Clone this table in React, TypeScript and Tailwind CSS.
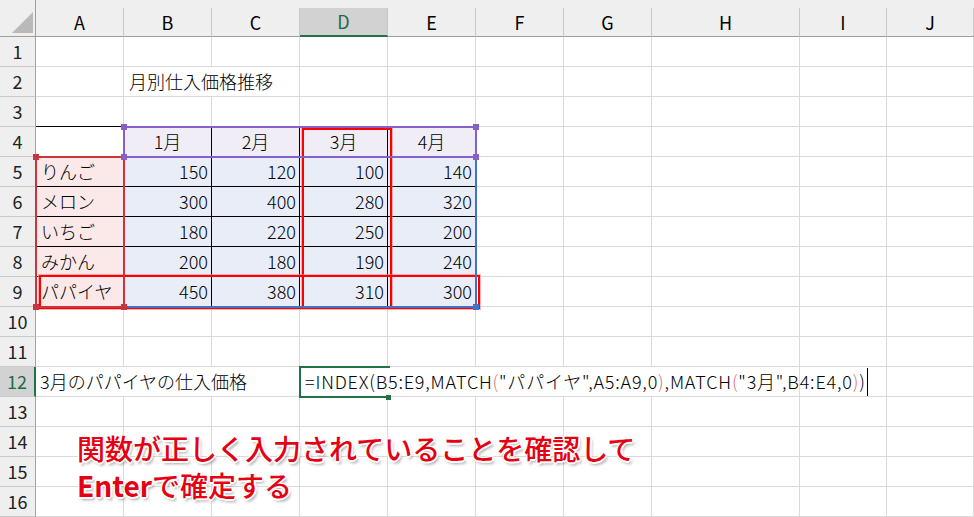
import React from 'react';

const cols = ['A', 'B', 'C', 'D', 'E', 'F', 'G', 'H', 'I', 'J'];

const fruits: [string, number, number, number, number][] = [
    ['りんご', 150, 120, 100, 140],
    ['メロン', 300, 400, 280, 320],
    ['いちご', 180, 220, 250, 200],
    ['みかん', 200, 180, 190, 240],
    ['パパイヤ', 450, 380, 310, 300],
];

const months = ['1月', '2月', '3月', '4月'];

// same track sizes for the sheet and for the layer drawn over it
const tracks = 'grid grid-cols-[36px_88px_88px_88px_88px_88px_88px_88px_148px_87px_87px] grid-rows-[37px_repeat(16,30px)]';

type CellProps = {
    children?: React.ReactNode;
    className?: string;
};

// one spreadsheet cell; the grid line sits on its right/bottom edge
const Cell = ({ children, className = '' }: CellProps) => (
    <div className={`flex items-center overflow-visible whitespace-nowrap border-b border-r ${className}`}>
        {children}
    </div>
);

const ColHeader = ({ label, active }: { label: string; active?: boolean }) => (
    <div className="h-[37px] bg-[#efefef] pt-2">
        <div
            className={`flex h-full items-center justify-center border-r border-[#c8c8c8] ${
                active ? 'border-b-2 border-b-[#217346] bg-[#d2d2d2] text-[#1e6b41]' : 'border-b border-b-[#9e9e9e] text-black'
            }`}
        >
            {label}
        </div>
    </div>
);

const RowHeader = ({ n, active }: { n: number; active?: boolean }) => (
    <div
        className={`flex items-center justify-center border-b border-[#c9c9c9] ${
            active ? 'border-r-2 border-r-[#217346] bg-[#d2d2d2] text-[#1e6b41]' : 'border-r border-r-[#a3a3a3] bg-[#efefef] text-[#222]'
        }`}
    >
        {n}
    </div>
);

const grid = 'border-[#dadada]';
const ink = 'border-black';

// little squares on the corners of a highlighted range
const Corners = ({ color, tl = true, tr = true, bl = true, br = true }: { color: string; tl?: boolean; tr?: boolean; bl?: boolean; br?: boolean }) => (
    <>
        {tl && <div className={`absolute -left-[4px] -top-[4px] h-[6px] w-[6px] ${color}`} />}
        {tr && <div className={`absolute -right-[4px] -top-[4px] h-[6px] w-[6px] ${color}`} />}
        {bl && <div className={`absolute -bottom-[4px] -left-[4px] h-[6px] w-[6px] ${color}`} />}
        {br && <div className={`absolute -bottom-[4px] -right-[4px] h-[6px] w-[6px] ${color}`} />}
    </>
);

export default function App() {
    const rows: React.ReactNode[] = [];

    for (let r = 1; r <= 16; r++) {
        rows.push(<RowHeader key={`h${r}`} n={r} active={r === 12} />);

        if (r === 2) {
            rows.push(<Cell key="2A" className={grid} />);
            rows.push(
                <Cell key="2B" className={`col-span-2 pl-[5px] font-light ${grid}`}>
                    月別仕入価格推移
                </Cell>
            );
            cols.slice(3).forEach((c) => rows.push(<Cell key={`2${c}`} className={grid} />));
            continue;
        }

        if (r === 12) {
            rows.push(
                <Cell key="12A" className={`col-span-3 pl-[4px] font-light ${grid}`}>
                    3月のパパイヤの仕入価格
                </Cell>
            );
            rows.push(
                <Cell key="12D" className={`col-span-5 pl-[5px] font-light tracking-[0.8px] ${grid}`}>
                    <span>=INDEX(B5:E9,MATCH</span>
                    <span className="text-[#e0707e]">(</span>
                    <span>"パパイヤ",A5:A9,0</span>
                    <span className="text-[#e0707e]">)</span>
                    <span>,MATCH</span>
                    <span className="text-[#e0707e]">(</span>
                    <span>"3月",B4:E4,0</span>
                    <span className="text-[#e0707e]">)</span>
                    <span>)</span>
                    <span className="ml-[1px] h-[28px] w-px shrink-0 bg-black" />
                </Cell>
            );
            rows.push(<Cell key="12I" className={grid} />);
            rows.push(<Cell key="12J" className={grid} />);
            continue;
        }

        cols.forEach((c, ci) => {
            const inTable = r >= 4 && r <= 9 && ci <= 4;
            let cls = grid;
            let content: React.ReactNode = null;

            if (r === 3 && ci <= 4) cls = `${grid} border-b-black`;
            if (inTable) cls = `${ink} font-light`;

            if (r === 4 && ci >= 1 && ci <= 4) {
                cls += ' bg-[#f0edf7] justify-center';
                content = months[ci - 1];
            } else if (r === 4 && ci === 0) {
                cls += ' bg-white';
            } else if (r >= 5 && r <= 9 && ci === 0) {
                cls += ' bg-[#fbe9e9] pl-[5px]';
                content = fruits[r - 5][0];
            } else if (r >= 5 && r <= 9 && ci <= 4) {
                cls += ' bg-[#e9edf7] justify-end pr-[3px]';
                content = fruits[r - 5][ci];
            }

            rows.push(
                <Cell key={`${r}${c}`} className={cls}>
                    {content}
                </Cell>
            );
        });
    }

    return (
        <div className="relative h-[517px] w-[974px] overflow-hidden bg-white font-['Noto_Sans_CJK_JP',sans-serif] text-[18px] text-black">
            <div className={tracks}>
                {/* corner */}
                <div className="relative h-[37px] border-b border-r border-[#9e9e9e] bg-[#efefef]">
                    <div className="absolute left-[12px] top-[12px] h-[21px] w-[21px] bg-[#b9b9b9] [clip-path:polygon(100%_0,100%_100%,0_100%)]" />
                </div>
                {cols.map((c) => (
                    <ColHeader key={c} label={c} active={c === 'D'} />
                ))}
                {rows}
            </div>

            {/* layer over the sheet, placed on the same grid lines */}
            <div className={`pointer-events-none absolute inset-0 ${tracks}`}>
                {/* references coloured while the formula is edited */}
                <div className="relative col-start-3 col-end-7 row-start-6 row-end-11 -m-[1px] border-2 border-[#4472c4]">
                    <Corners color="bg-[#4472c4]" tl={false} tr={false} bl={false} />
                </div>
                <div className="relative col-start-2 col-end-3 row-start-6 row-end-11 -m-[1px] border-2 border-[#c9353d]">
                    <Corners color="bg-[#c9353d]" tr={false} />
                </div>
                <div className="relative col-start-3 col-end-7 row-start-5 row-end-6 -m-[1px] border-2 border-[#8561c5]">
                    <Corners color="bg-[#8561c5]" />
                </div>

                {/* red callout boxes */}
                <div className="col-start-5 col-end-6 row-start-5 row-end-11 -mb-[1px] -mr-[4px] ml-[2px] mt-[1px] border-2 border-[#ff0000] shadow-[0_0_0_1px_rgba(255,120,120,0.55)]" />
                <div className="col-start-2 col-end-7 row-start-10 row-end-11 -my-[2px] -mr-[4px] ml-[3px] border-2 border-[#ff0000] shadow-[0_0_0_1px_rgba(255,120,120,0.55)]" />

                {/* active cell D12 */}
                <div className="relative col-start-5 col-end-6 row-start-13 row-end-14 -my-[1px] -ml-[1px] -mr-[2px] border-b-2 border-l-2 border-t-2 border-[#217346]">
                    <div className="absolute -bottom-[4px] -right-[1px] h-[5px] w-[5px] bg-[#217346]" />
                </div>

                {/* note */}
                <div className="col-start-2 col-end-12 row-start-15 row-end-18 pl-[41px] pt-[3px] text-[28px] font-medium leading-[37px] text-[#e50012] [text-shadow:1px_1px_0_#fff,-1px_-1px_0_#fff,1px_-1px_0_#fff,-1px_1px_0_#fff,0_2px_0_#fff,2px_0_0_#fff,2px_3px_3px_rgba(0,0,0,0.35)]">
                    <div>関数が正しく入力されていることを確認して</div>
                    <div>
                        <span className="font-bold">Enter</span>で確定する
                    </div>
                </div>
            </div>
        </div>
    );
}
